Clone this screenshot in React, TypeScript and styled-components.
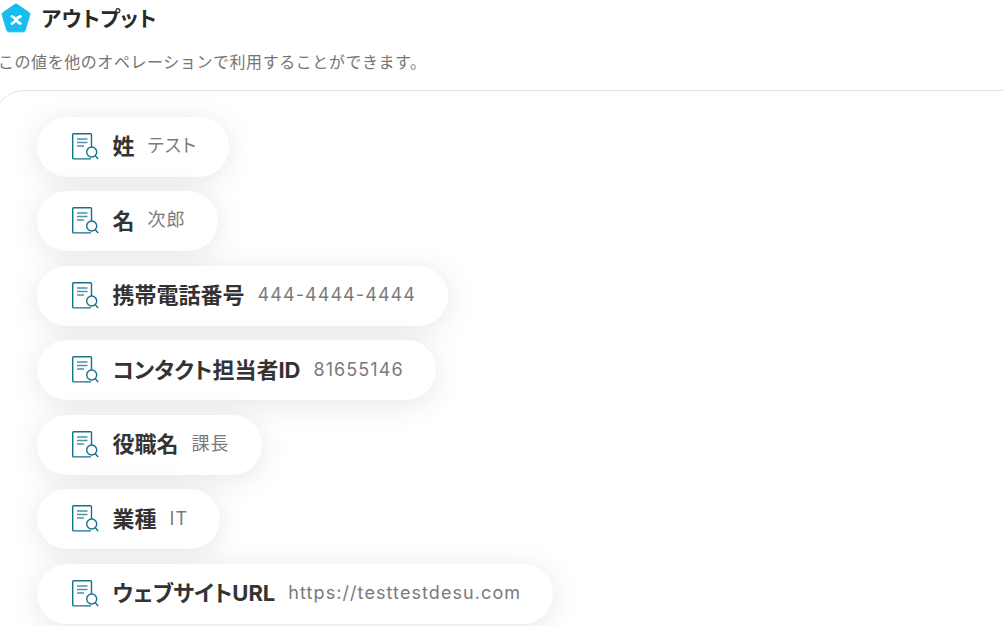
import styled, { createGlobalStyle } from 'styled-components';

const outputs = [
  { label: '姓', value: 'テスト', latin: false },
  { label: '名', value: '次郎', latin: false },
  { label: '携帯電話番号', value: '444-4444-4444', latin: true },
  { label: 'コンタクト担当者ID', value: '81655146', latin: true },
  { label: '役職名', value: '課長', latin: false },
  { label: '業種', value: 'IT', latin: true },
  { label: 'ウェブサイトURL', value: 'https://testtestdesu.com', latin: true },
];

const GlobalStyle = createGlobalStyle`
  html, body {
    margin: 0;
    height: 100%;
    overflow: hidden;
    background: #fff;
  }
  body {
    font-family: Inter, "Noto Sans CJK JP", sans-serif;
    font-feature-settings: "palt";
    color: #2a2a2a;
  }
`;

const Page = styled.div`
  width: 1004px;
  height: 626px;
  overflow: hidden;
  box-sizing: border-box;
`;

const Heading = styled.div`
  display: flex;
  align-items: center;
  gap: 10.5px;
  height: 36px;
  padding-left: 1px;
`;

const Title = styled.h2`
  margin: 1px 0 0;
  font-size: 21px;
  font-weight: 700;
  line-height: 34px;
  letter-spacing: 0.6px;
`;

const Description = styled.p`
  margin: 14px 0 0 -2px;
  font-size: 16px;
  line-height: 24px;
  letter-spacing: 0.56px;
  color: #757575;
  white-space: nowrap;
  font-feature-settings: normal;
`;

const Panel = styled.div`
  margin: 16px -40px 0 -6px;
  padding: 25.7px 0 40px 42px;
  border: 1px solid #e4e4e4;
  border-radius: 30px;
  display: flex;
  flex-direction: column;
  align-items: flex-start;
  gap: 14.5px;
`;

const Pill = styled.div`
  display: flex;
  align-items: center;
  height: 60px;
  padding: 0 32px 0 34px;
  background: #fff;
  border-radius: 30px;
  box-shadow: 0 4px 30px rgba(0, 0, 0, 0.1);
  white-space: nowrap;
`;

const IconSlot = styled.span`
  display: flex;
  margin-bottom: 2px;
`;

const Label = styled.span`
  margin: 0 0 5px 13.5px;
  font-size: 22px;
  font-weight: 700;
  color: #333;
`;

const Value = styled.span<{ $latin: boolean }>`
  margin: 0 0 ${({ $latin }) => ($latin ? '2px' : '6px')} 13px;
  font-size: 18px;
  font-weight: 400;
  letter-spacing: 1.08px;
  color: #7a7a7a;
`;

const LogoIcon = () => (
  <svg width="30" height="30" viewBox="0 0 30 30">
    <path
      d="M15 3 L28 12 Q29.2 12.9 28.8 14.3 L24.6 29 Q24.1 32 22 32 L8 32 Q5.9 32 5.4 29 L1.2 14.3 Q0.8 12.9 2 12 Z"
      transform="translate(0 -2.2) scale(1 0.97)"
      fill="#17bcf0"
      stroke="#17bcf0"
      strokeWidth="1"
      strokeLinejoin="round"
    />
    <path
      d="M11 13.5 C13 13.9 13.8 15.2 15 16.8 C16.2 18.4 17 19.9 19.4 20.5 M19.4 13.5 C17 13.9 16.2 15.2 15 16.8 C13.8 18.4 13 19.9 11 20.5"
      fill="none"
      stroke="#fff"
      strokeWidth="2.8"
      strokeLinecap="round"
    />
  </svg>
);

const DocSearchIcon = () => (
  <svg width="28" height="28" viewBox="0 0 28 28" fill="none" stroke="#14738c" strokeWidth="1.4">
    <path d="M20.5 15 V2.6 Q20.5 1.7 19.6 1.7 H2.6 Q1.7 1.7 1.7 2.6 V26 Q1.7 26.9 2.6 26.9 H20" />
    <path d="M6 7 H16.5 M6 10.5 H16.5 M6 14 H13" stroke="#4c93a6" />
    <circle cx="20.7" cy="20" r="5" />
    <path d="M24.3 23.8 L27.2 27" />
  </svg>
);

export default function App() {
  return (
    <Page>
      <GlobalStyle />
      <Heading>
        <LogoIcon />
        <Title>アウトプット</Title>
      </Heading>
      <Description>この値を他のオペレーションで利用することができます。</Description>
      <Panel>
        {outputs.map((o) => (
          <Pill key={o.label}>
            <IconSlot>
              <DocSearchIcon />
            </IconSlot>
            <Label>{o.label}</Label>
            <Value $latin={o.latin}>{o.value}</Value>
          </Pill>
        ))}
      </Panel>
    </Page>
  );
}
